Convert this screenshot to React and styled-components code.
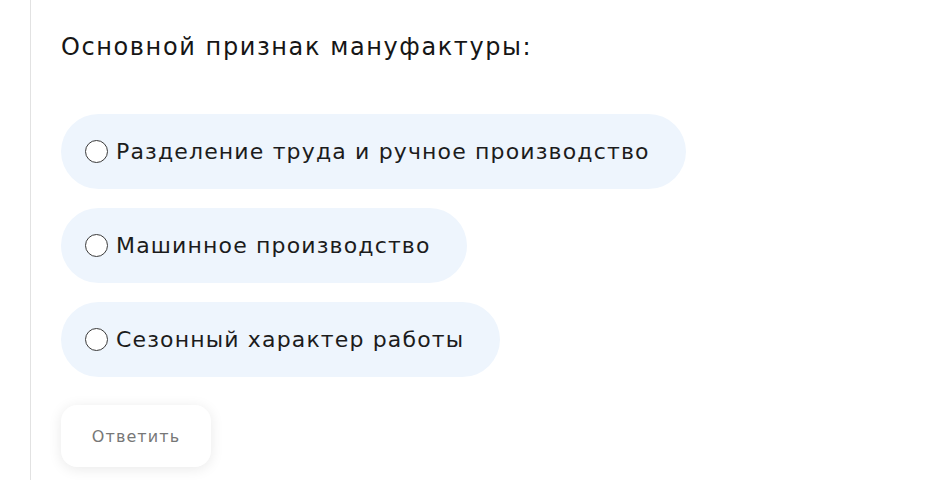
import React, {useState} from 'react'
import styled, {createGlobalStyle} from 'styled-components'

const GlobalStyle = createGlobalStyle`
  html, body {
    margin: 0;
    padding: 0;
    background: #ffffff;
  }
  body {
    font-family: "DejaVu Sans", "Noto Sans", sans-serif;
    color: #111;
  }
`

const Page = styled.div`
  width: 928px;
  height: 480px;
  overflow: hidden;
  padding-left: 30px;
  box-sizing: border-box;
`

const Panel = styled.div`
  border-left: 1px solid #e2e2e2;
  height: 100%;
  padding: 30px 0 0 30px;
  box-sizing: border-box;
`

const Question = styled.h2`
  margin: 0 0 50px 0;
  font-weight: 400;
  font-size: 24px;
  line-height: 34px;
  letter-spacing: 1.6px;
  color: #161616;
`

const Options = styled.div`
  display: flex;
  flex-direction: column;
  align-items: flex-start;
  gap: 19px;
`

const Option = styled.label`
  display: flex;
  align-items: center;
  gap: 8px;
  height: 75px;
  padding: 0 36px 0 24px;
  box-sizing: border-box;
  border-radius: 38px;
  background: ${p => (p.$checked ? '#dcebfb' : '#eef5fd')};
  font-size: 22px;
  letter-spacing: 1.15px;
  color: #1c1c1c;
  cursor: pointer;
`

const Radio = styled.span`
  width: 21px;
  height: 21px;
  border-radius: 50%;
  border: 1.3px solid #3a3a3a;
  background: #fff;
  flex: 0 0 auto;
  display: flex;
  align-items: center;
  justify-content: center;
  &::after {
    content: '';
    width: 11px;
    height: 11px;
    border-radius: 50%;
    background: ${p => (p.$checked ? '#3a3a3a' : 'transparent')};
  }
`

const Submit = styled.button`
  margin-top: 28px;
  width: 150px;
  height: 62px;
  border: none;
  border-radius: 16px;
  background: #fff;
  box-shadow: 0 2px 14px rgba(0, 0, 0, 0.09);
  font-family: inherit;
  font-size: 16px;
  letter-spacing: 1.1px;
  color: #777;
  cursor: pointer;
`

const answers = [
  'Разделение труда и ручное производство',
  'Машинное производство',
  'Сезонный характер работы',
]

export default function App() {
  const [selected, setSelected] = useState(null)
  return (
    <Page>
      <GlobalStyle />
      <Panel>
        <Question>Основной признак мануфактуры:</Question>
        <Options>
          {answers.map((a, i) => (
            <Option key={a} $checked={selected === i} onClick={() => setSelected(i)}>
              <Radio $checked={selected === i} />
              {a}
            </Option>
          ))}
        </Options>
        <Submit>Ответить</Submit>
      </Panel>
    </Page>
  )
}
